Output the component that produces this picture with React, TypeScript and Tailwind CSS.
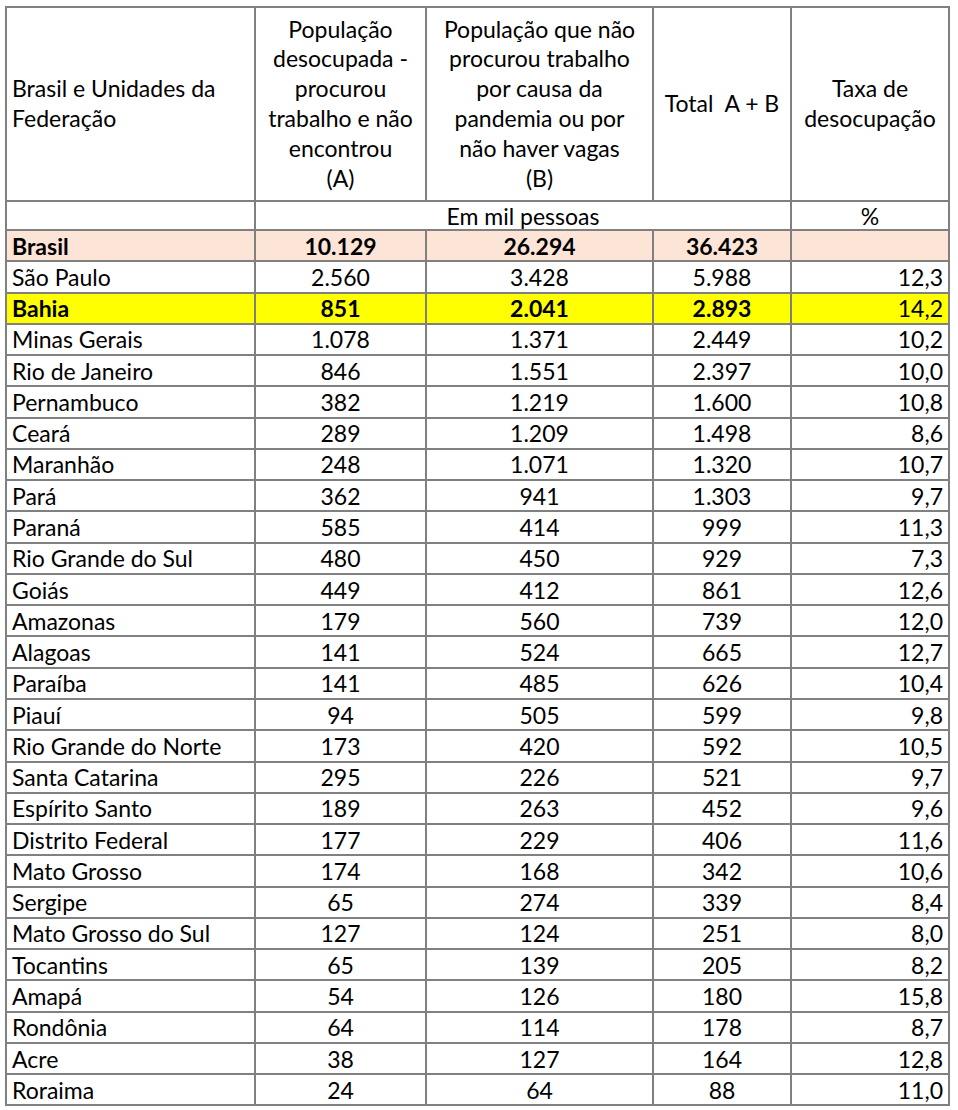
import React from "react";

type Row = { name: string; a: string; b: string; t: string; r: string; kind?: "brasil" | "bahia" };

const rows: Row[] = [
  { name: "Brasil", a: "10.129", b: "26.294", t: "36.423", r: "", kind: "brasil" },
  { name: "São Paulo", a: "2.560", b: "3.428", t: "5.988", r: "12,3" },
  { name: "Bahia", a: "851", b: "2.041", t: "2.893", r: "14,2", kind: "bahia" },
  { name: "Minas Gerais", a: "1.078", b: "1.371", t: "2.449", r: "10,2" },
  { name: "Rio de Janeiro", a: "846", b: "1.551", t: "2.397", r: "10,0" },
  { name: "Pernambuco", a: "382", b: "1.219", t: "1.600", r: "10,8" },
  { name: "Ceará", a: "289", b: "1.209", t: "1.498", r: "8,6" },
  { name: "Maranhão", a: "248", b: "1.071", t: "1.320", r: "10,7" },
  { name: "Pará", a: "362", b: "941", t: "1.303", r: "9,7" },
  { name: "Paraná", a: "585", b: "414", t: "999", r: "11,3" },
  { name: "Rio Grande do Sul", a: "480", b: "450", t: "929", r: "7,3" },
  { name: "Goiás", a: "449", b: "412", t: "861", r: "12,6" },
  { name: "Amazonas", a: "179", b: "560", t: "739", r: "12,0" },
  { name: "Alagoas", a: "141", b: "524", t: "665", r: "12,7" },
  { name: "Paraíba", a: "141", b: "485", t: "626", r: "10,4" },
  { name: "Piauí", a: "94", b: "505", t: "599", r: "9,8" },
  { name: "Rio Grande do Norte", a: "173", b: "420", t: "592", r: "10,5" },
  { name: "Santa Catarina", a: "295", b: "226", t: "521", r: "9,7" },
  { name: "Espírito Santo", a: "189", b: "263", t: "452", r: "9,6" },
  { name: "Distrito Federal", a: "177", b: "229", t: "406", r: "11,6" },
  { name: "Mato Grosso", a: "174", b: "168", t: "342", r: "10,6" },
  { name: "Sergipe", a: "65", b: "274", t: "339", r: "8,4" },
  { name: "Mato Grosso do Sul", a: "127", b: "124", t: "251", r: "8,0" },
  { name: "Tocantins", a: "65", b: "139", t: "205", r: "8,2" },
  { name: "Amapá", a: "54", b: "126", t: "180", r: "15,8" },
  { name: "Rondônia", a: "64", b: "114", t: "178", r: "8,7" },
  { name: "Acre", a: "38", b: "127", t: "164", r: "12,8" },
  { name: "Roraima", a: "24", b: "64", t: "88", r: "11,0" },
];

const cell = "border-2 border-[#808080] p-0";

export default function App() {
  return (
    <div className="min-h-[1110px] w-[958px] bg-white pl-[5px] pt-[6px] text-black" style={{ fontFamily: "Lato, 'Open Sans', sans-serif" }}>
      <table className="w-[943px] table-fixed border-collapse text-[23px] leading-[24px]">
        <colgroup>
          <col className="w-[249px]" />
          <col className="w-[171px]" />
          <col className="w-[227px]" />
          <col className="w-[138px]" />
          <col className="w-[158px]" />
        </colgroup>
        <thead className="leading-[29.8px]">
          <tr className="h-[194px]">
            <th className={`${cell} px-[5px] text-left align-middle font-normal`}>
              Brasil e Unidades da
              <br />
              Federação
            </th>
            <th className={`${cell} text-center align-middle font-normal`}>
              População
              <br />
              desocupada -
              <br />
              procurou
              <br />
              trabalho e não
              <br />
              encontrou
              <br />
              (A)
            </th>
            <th className={`${cell} text-center align-middle font-normal`}>
              População que não
              <br />
              procurou trabalho
              <br />
              por causa da
              <br />
              pandemia ou por
              <br />
              não haver vagas
              <br />
              (B)
            </th>
            <th className={`${cell} whitespace-pre text-center align-middle font-normal`}>Total  A + B</th>
            <th className={`${cell} text-center align-middle font-normal`}>
              Taxa de
              <br />
              desocupação
            </th>
          </tr>
          <tr className="h-[29px] leading-[24px]">
            <th className={`${cell} font-normal`}></th>
            <th colSpan={3} className={`${cell} text-center align-middle font-normal`}>
              Em mil pessoas
            </th>
            <th className={`${cell} text-center align-middle font-normal`}>%</th>
          </tr>
        </thead>
        <tbody>
          {rows.map((r) => {
            const bg = r.kind === "brasil" ? "bg-[#fce4d6]" : r.kind === "bahia" ? "bg-[#ffff00]" : "bg-white";
            const bold = r.kind ? "font-bold" : "font-normal";
            return (
              <tr key={r.name} className={`h-[31.28px] ${bg}`}>
                <td className={`${cell} px-[5px] text-left align-middle ${bold}`}>{r.name}</td>
                <td className={`${cell} text-center align-middle ${bold}`}>{r.a}</td>
                <td className={`${cell} text-center align-middle ${bold}`}>{r.b}</td>
                <td className={`${cell} text-center align-middle ${bold}`}>{r.t}</td>
                <td className={`${cell} pr-[5px] text-right align-middle font-normal`}>{r.r}</td>
              </tr>
            );
          })}
        </tbody>
      </table>
    </div>
  );
}
